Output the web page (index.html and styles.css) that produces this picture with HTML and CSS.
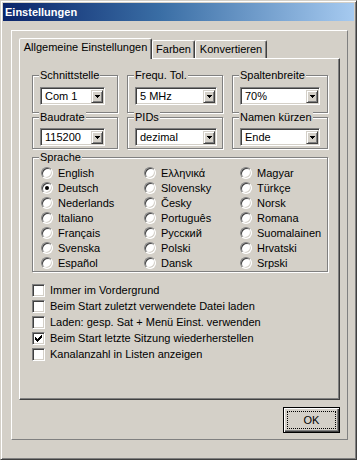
FILE: index.html
```html
<!DOCTYPE html>
<html lang="de">
<head>
<meta charset="utf-8">
<title>Einstellungen</title>
<link rel="stylesheet" href="styles.css">
</head>
<body>
<div class="window">
  <div class="titlebar">Einstellungen</div>
  <div class="frame">
    <div class="tabs">
      <div class="tab active">Allgemeine Einstellungen</div>
      <div class="tab t-farben">Farben</div>
      <div class="tab t-konv">Konvertieren</div>
    </div>
    <div class="panel">
      <div class="groups">
        <div class="group row1">
          <span class="legend">Schnittstelle</span>
          <div class="combo c-narrow"><span class="val">Com 1</span><span class="drop"><svg width="5" height="3" viewBox="0 0 5 3"><path d="M0 0h5v1H0zM1 1h3v1H1zM2 2h1v1H2z"/></svg></span></div>
        </div>
        <div class="group row1">
          <span class="legend">Frequ. Tol.</span>
          <div class="combo c-wide"><span class="val">5 MHz</span><span class="drop"><svg width="5" height="3" viewBox="0 0 5 3"><path d="M0 0h5v1H0zM1 1h3v1H1zM2 2h1v1H2z"/></svg></span></div>
        </div>
        <div class="group row1">
          <span class="legend">Spaltenbreite</span>
          <div class="combo c-wide2"><span class="val">70%</span><span class="drop"><svg width="5" height="3" viewBox="0 0 5 3"><path d="M0 0h5v1H0zM1 1h3v1H1zM2 2h1v1H2z"/></svg></span></div>
        </div>
        <div class="group row2">
          <span class="legend">Baudrate</span>
          <div class="combo c-narrow"><span class="val">115200</span><span class="drop"><svg width="5" height="3" viewBox="0 0 5 3"><path d="M0 0h5v1H0zM1 1h3v1H1zM2 2h1v1H2z"/></svg></span></div>
        </div>
        <div class="group row2">
          <span class="legend">PIDs</span>
          <div class="combo c-wide"><span class="val">dezimal</span><span class="drop"><svg width="5" height="3" viewBox="0 0 5 3"><path d="M0 0h5v1H0zM1 1h3v1H1zM2 2h1v1H2z"/></svg></span></div>
        </div>
        <div class="group row2">
          <span class="legend">Namen kürzen</span>
          <div class="combo c-wide2"><span class="val">Ende</span><span class="drop"><svg width="5" height="3" viewBox="0 0 5 3"><path d="M0 0h5v1H0zM1 1h3v1H1zM2 2h1v1H2z"/></svg></span></div>
        </div>
      </div>

      <div class="group sprache">
        <span class="legend">Sprache</span>
        <div class="radios">
          <div class="opt"><span class="radio"></span>English</div>
          <div class="opt"><span class="radio checked"></span>Deutsch</div>
          <div class="opt"><span class="radio"></span>Nederlands</div>
          <div class="opt"><span class="radio"></span>Italiano</div>
          <div class="opt"><span class="radio"></span>Français</div>
          <div class="opt"><span class="radio"></span>Svenska</div>
          <div class="opt"><span class="radio"></span>Español</div>
          <div class="opt"><span class="radio"></span>Ελληνικά</div>
          <div class="opt"><span class="radio"></span>Slovensky</div>
          <div class="opt"><span class="radio"></span>Česky</div>
          <div class="opt"><span class="radio"></span>Português</div>
          <div class="opt"><span class="radio"></span>Русский</div>
          <div class="opt"><span class="radio"></span>Polski</div>
          <div class="opt"><span class="radio"></span>Dansk</div>
          <div class="opt"><span class="radio"></span>Magyar</div>
          <div class="opt"><span class="radio"></span>Türkçe</div>
          <div class="opt"><span class="radio"></span>Norsk</div>
          <div class="opt"><span class="radio"></span>Romana</div>
          <div class="opt"><span class="radio"></span>Suomalainen</div>
          <div class="opt"><span class="radio"></span>Hrvatski</div>
          <div class="opt"><span class="radio"></span>Srpski</div>
        </div>
      </div>

      <div class="checks">
        <div class="chk"><span class="box"></span>Immer im Vordergrund</div>
        <div class="chk"><span class="box"></span>Beim Start zuletzt verwendete Datei laden</div>
        <div class="chk"><span class="box"></span>Laden: gesp. Sat + Menü Einst. verwenden</div>
        <div class="chk"><span class="box"><svg width="7" height="7" viewBox="0 0 7 7"><path d="M0 2h1v3H0zM1 3h1v3H1zM2 4h1v3H2zM3 3h1v3H3zM4 2h1v3H4zM5 1h1v3H5zM6 0h1v3H6z"/></svg></span>Beim Start letzte Sitzung wiederherstellen</div>
        <div class="chk"><span class="box"></span>Kanalanzahl in Listen anzeigen</div>
      </div>
    </div>
    <div class="buttons">
      <button class="ok" type="button"><span class="focus">OK</span></button>
    </div>
  </div>
</div>
</body>
</html>
```

FILE: styles.css
```css
html, body {
  margin: 0;
  padding: 0;
  background: #d4d0c8;
}
body {
  font-family: "Liberation Sans", Arial, sans-serif;
  font-size: 11px;
  color: #000;
}

.window {
  width: 357px;
  height: 460px;
  box-sizing: border-box;
  border: 1px solid;
  border-color: #d4d0c8 #404040 #404040 #d4d0c8;
  box-shadow: inset 1px 1px 0 #fff, inset -1px -1px 0 #808080;
  padding: 2px;
  background: #d4d0c8;
}

.titlebar {
  height: 18px;
  line-height: 18px;
  padding-left: 2px;
  color: #fff;
  font-weight: bold;
  font-size: 11px;
  background: linear-gradient(to right, #0a246a 0%, #3a6ea5 45%, #a6caf0 100%);
}

.frame {
  margin: 9px 6px 0 8px;
  height: 410px;
  box-sizing: border-box;
  border: 1px solid;
  border-color: #fff #808080 #808080 #fff;
  padding: 7px 7px 6px 7px;
}

.tabs {
  display: flex;
  align-items: flex-end;
  height: 20px;
}
.tab {
  box-sizing: border-box;
  height: 18px;
  line-height: 17px;
  text-align: center;
  border: 1px solid;
  border-bottom: none;
  border-color: #fff #404040 transparent #fff;
  border-radius: 2px 2px 0 0;
  box-shadow: inset -1px 0 0 #808080;
  background: #d4d0c8;
  white-space: nowrap;
}
.tab.active {
  width: 133px;
  height: 21px;
  margin-bottom: -1px;
  position: relative;
  z-index: 1;
}
.t-farben { width: 43px; }
.t-konv { width: 72px; }

.panel {
  height: 342px;
  box-sizing: border-box;
  border: 1px solid;
  border-color: #fff #404040 #404040 #fff;
  box-shadow: inset -1px -1px 0 #808080;
  padding: 16px 0 0 12px;
}

.groups {
  display: grid;
  grid-template-columns: 86px 96px 96px;
  grid-template-rows: 38px 32px;
  column-gap: 9px;
  row-gap: 4px;
}

.group {
  position: relative;
  box-sizing: border-box;
  border: 1px solid #808080;
  box-shadow: inset 1px 1px 0 #fff, 1px 1px 0 #fff;
}
.group.row1 { padding: 11px 0 0 7px; }
.group.row2 { padding: 10px 0 0 7px; }

.legend {
  position: absolute;
  top: -7px;
  left: 6px;
  padding: 0 1px;
  line-height: 13px;
  background: #d4d0c8;
  white-space: nowrap;
}

.combo {
  display: flex;
  align-items: stretch;
  height: 18px;
  box-sizing: border-box;
  border: 1px solid;
  border-color: #808080 #fff #fff #808080;
  box-shadow: inset 1px 1px 0 #404040, inset -1px -1px 0 #d4d0c8;
  background: #fff;
  padding: 2px 1px 1px 2px;
}
.c-narrow { width: 65px; }
.c-wide { width: 82px; }
.c-wide2 { width: 80px; }

.val {
  flex: 1;
  padding-left: 2px;
  line-height: 13px;
  white-space: nowrap;
}
.drop {
  width: 12px;
  box-sizing: border-box;
  display: flex;
  align-items: center;
  justify-content: center;
  background: #d4d0c8;
  border: 1px solid;
  border-color: #d4d0c8 #404040 #404040 #d4d0c8;
  box-shadow: inset 1px 1px 0 #fff, inset -1px -1px 0 #808080;
}
.drop svg { display: block; fill: #000; }

.sprache {
  margin-top: 8px;
  width: 296px;
  height: 115px;
  padding: 7px 0 0 8px;
}

.radios {
  display: grid;
  grid-auto-flow: column;
  grid-template-rows: repeat(7, 15px);
  grid-template-columns: 103px 96px 1fr;
}
.opt {
  display: flex;
  align-items: center;
  gap: 5px;
  white-space: nowrap;
}
.radio {
  position: relative;
  width: 12px;
  height: 12px;
  box-sizing: border-box;
  border-radius: 50%;
  border: 1px solid;
  border-color: #808080 #fff #fff #808080;
  box-shadow: inset 1px 1px 0 #404040, inset -1px -1px 0 #d4d0c8;
  background: #fff;
  flex: none;
}
.radio.checked::after {
  content: "";
  position: absolute;
  left: 3px;
  top: 3px;
  width: 4px;
  height: 4px;
  border-radius: 50%;
  background: #000;
}

.checks {
  margin-top: 10px;
}
.chk {
  display: flex;
  align-items: center;
  gap: 5px;
  height: 16px;
  white-space: nowrap;
}
.box {
  width: 13px;
  height: 13px;
  box-sizing: border-box;
  border: 1px solid;
  border-color: #808080 #fff #fff #808080;
  box-shadow: inset 1px 1px 0 #404040, inset -1px -1px 0 #d4d0c8;
  background: #fff;
  flex: none;
  padding: 2px 0 0 2px;
}
.box svg { display: block; fill: #000; }

.buttons {
  display: flex;
  justify-content: flex-end;
  margin-top: 7px;
}
.ok {
  width: 57px;
  height: 26px;
  box-sizing: border-box;
  margin: 0;
  padding: 3px;
  border: 1px solid #000;
  background: #d4d0c8;
  box-shadow: inset 1px 1px 0 #fff, inset -1px -1px 0 #404040, inset -2px -2px 0 #808080;
  font-family: "Liberation Sans", Arial, sans-serif;
  font-size: 11px;
  color: #000;
}
.focus {
  display: flex;
  align-items: center;
  justify-content: center;
  height: 100%;
  box-sizing: border-box;
  border: 1px dotted #000;
}
```
